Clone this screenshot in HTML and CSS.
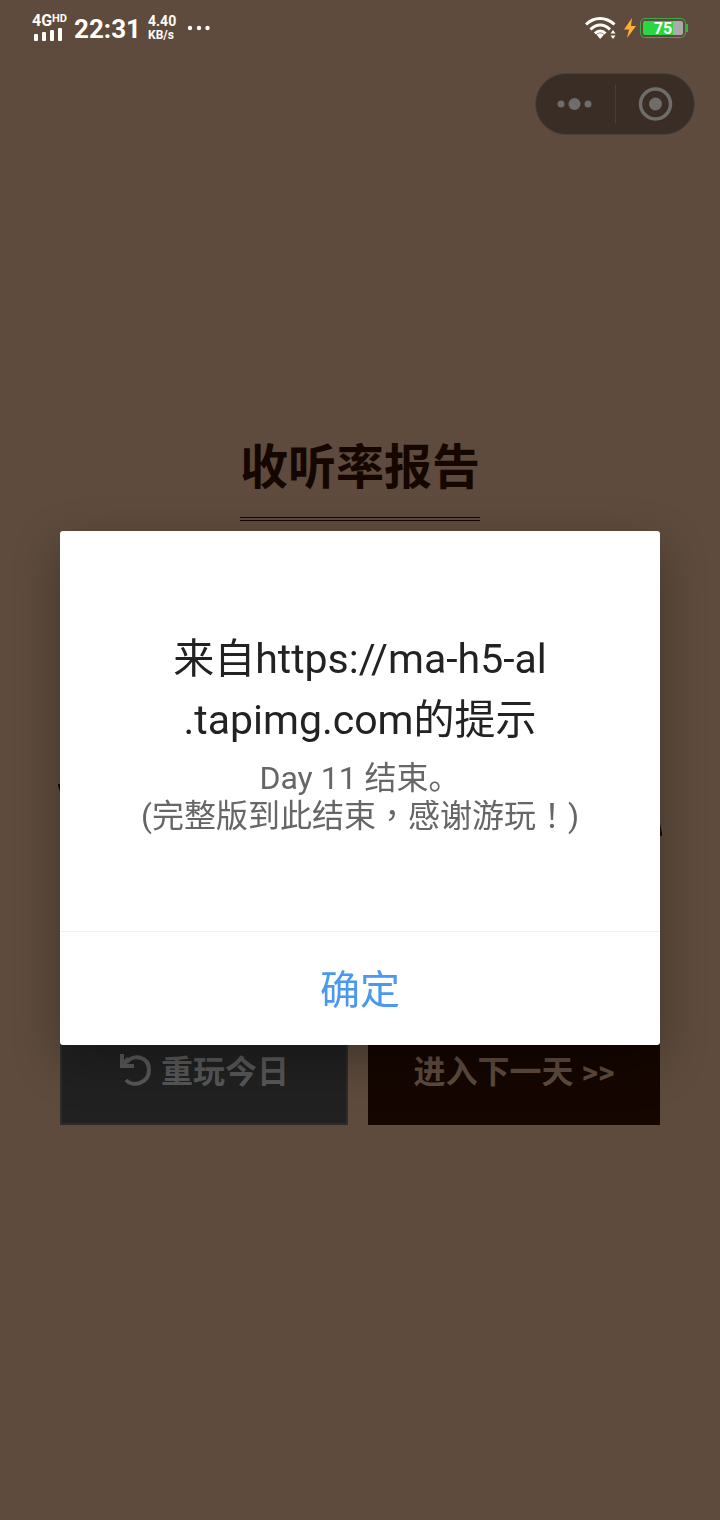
FILE: index.html
```
<!DOCTYPE html>
<html lang="zh-CN">
<head>
  <meta charset="UTF-8">
  <meta name="viewport" content="width=device-width, initial-scale=1.0">
  <title>收听率报告</title>
  <link rel="stylesheet" href="styles.css">
</head>
<body>
  <header class="status-bar">
    <div class="signal">
      <div class="signal-type">4G<small>HD</small></div>
      <svg width="30" height="13" viewBox="0 0 30 13" fill="currentColor">
        <rect x="0" y="6" width="4" height="7" rx="1"/>
        <rect x="8" y="4" width="4" height="9" rx="1"/>
        <rect x="16" y="2" width="4" height="11" rx="1"/>
        <rect x="24" y="0" width="4" height="13" rx="1"/>
      </svg>
    </div>
    <div class="time">22:31</div>
    <div class="speed">4.40<br><span>KB/s</span></div>
    <svg class="more" width="24" height="6" viewBox="0 0 24 6" fill="currentColor">
      <circle cx="3" cy="3" r="2.200"/>
      <circle cx="12" cy="3" r="2.200"/>
      <circle cx="20.500" cy="3" r="2.200"/>
    </svg>
    <svg class="wifi" width="32" height="24" viewBox="0 0 32 24" fill="none" stroke="currentColor" stroke-width="3">
      <path d="M1 8.500C9 .5 21 .5 29.500 8.500"/>
      <path d="M5.500 13.500C11.500 7.500 19 7.500 25 13.500"/>
      <path d="M10 17.500C13 14.200 17.500 14.200 20.500 17.500"/>
      <path d="M11.500 18.500Q15.200 16 19 18.500L15.200 23Z" fill="currentColor" stroke="none"/>
      <path d="M25.500 17.500L28 14L30.500 17.500ZM25.500 19.500L28 23L30.500 19.500Z" fill="currentColor" stroke="none"/>
    </svg>
    <svg class="bolt" width="12" height="20" viewBox="0 0 12 20">
      <path d="M8 0L0 11.500H5L3 20L12 8H7Z" fill="#ffae35"/>
    </svg>
    <div class="battery"><span>75</span></div>
  </header>

  <nav class="capsule">
    <button aria-label="更多">
      <svg width="36" height="14" viewBox="0 0 36 14" fill="currentColor">
        <circle cx="4" cy="7" r="3.500"/>
        <circle cx="17.500" cy="7" r="6"/>
        <circle cx="31" cy="7" r="3.500"/>
      </svg>
    </button>
    <button aria-label="关闭">
      <svg width="36" height="36" viewBox="0 0 36 36">
        <circle cx="18.500" cy="18" r="15" fill="none" stroke="currentColor" stroke-width="3.500"/>
        <circle cx="18.500" cy="18" r="6.500" fill="currentColor"/>
      </svg>
    </button>
  </nav>

  <main class="report">
    <h1>收听率报告</h1>
    <svg class="chart" viewBox="0 0 604 480" preserveAspectRatio="none">
      <polyline points="1,248 8,270 100,210 220,300 340,190 480,330 597,270 603,300" fill="none" stroke="#0b0f0a" stroke-width="3"/>
    </svg>
    <div class="actions">
      <button class="replay">
        <svg width="34" height="34" viewBox="0 0 34 34" fill="none" stroke="currentColor" stroke-width="4">
          <path d="M8 10C14 2 30 4 30 18C30 31 14 36 7 28"/>
          <path d="M1 2H5V8L8 5L11 8L8 12H15V16H1Z" fill="currentColor" stroke="none"/>
        </svg>
        重玩今日
      </button>
      <button class="next">进入下一天 &gt;&gt;</button>
    </div>
  </main>

  <div class="overlay">
    <div class="dialog" role="alertdialog" aria-labelledby="dialog-title">
      <div class="dialog-content">
        <h2 id="dialog-title">来自https://ma-h5-al<br>.tapimg.com的提示</h2>
        <p>Day 11 结束。<br>(完整版到此结束<span class="mid" lang="zh-TW">，</span>感谢游玩<span class="mid" lang="zh-TW">！</span>)</p>
      </div>
      <button class="confirm">确定</button>
    </div>
  </div>
</body>
</html>
```
FILE: styles.css
```
* {
  box-sizing: border-box;
}
body {
  margin: 0;
  min-height: 100vh;
  display: flex;
  flex-direction: column;
  background: #5e4b3d;
  font-family: Roboto, "Noto Sans CJK SC", sans-serif;
}
button {
  border: none;
  padding: 0;
  background: none;
  font-family: inherit;
  cursor: pointer;
}
svg {
  display: block;
  flex: none;
}

/* status bar */
.status-bar {
  height: 56px;
  padding: 0 32px;
  display: flex;
  align-items: center;
  color: #fffdf8;
  font-weight: 700;
}
.signal {
  width: 36px;
  padding-bottom: 2px;
}
.signal-type {
  display: flex;
  font-size: 16px;
  line-height: 14px;
}
.signal-type small {
  font-size: 11px;
  line-height: 9px;
}
.signal svg {
  margin-left: 2px;
}
.time {
  margin-left: 6px;
  padding-top: 2px;
  font-size: 26px;
}
.speed {
  margin-left: 7px;
  font-size: 14px;
  line-height: 13px;
}
.speed span {
  font-size: 12px;
}
.more {
  margin-left: 11px;
}
.wifi {
  margin-left: auto;
}
.bolt {
  margin: 0 4px 0 7px;
}
.battery {
  position: relative;
  width: 46px;
  height: 20px;
  margin-right: 2px;
  border: 1px solid #3fa845;
  border-radius: 5px;
  padding: 2px;
}
.battery span {
  display: block;
  height: 14px;
  border-radius: 2px;
  background: linear-gradient(to right, #2bd544 75%, #aaa 75%);
  font-size: 16px;
  line-height: 15px;
  text-align: center;
}
.battery::after {
  content: "";
  position: absolute;
  top: 5px;
  right: -3px;
  width: 2px;
  height: 8px;
  background: #2fb63f;
}

/* mini program capsule */
.capsule {
  align-self: flex-end;
  display: flex;
  width: 160px;
  height: 62px;
  margin: 17px 25px 0 0;
  padding: 11px 0;
  border: 1px solid #4b423b;
  border-radius: 31px;
  background: #3a2d25;
}
.capsule button {
  flex: 1;
  display: flex;
  align-items: center;
  justify-content: center;
  color: #6e6d69;
}
.capsule button + button {
  border-left: 1px solid #4a3d35;
}

/* report */
.report {
  flex: 1;
  display: flex;
  flex-direction: column;
  padding: 295px 60px 60px;
}
.report h1 {
  align-self: center;
  margin: 0 0 15px;
  padding-bottom: 11px;
  border-bottom: 4px double #150600;
  color: #150600;
  font-size: 48px;
  line-height: 76px;
}
.chart {
  width: calc(100% + 4px);
  height: 480px;
  margin: 0 -2px;
}
.actions {
  display: flex;
  gap: 20px;
  margin-top: 2px;
}
.actions button {
  height: 107px;
  display: flex;
  align-items: center;
  justify-content: center;
  padding-bottom: 6px;
  font-size: 32px;
  font-weight: 700;
}
.replay {
  flex: 284;
  gap: 8px;
  border: 2px solid #2c2c2b;
  background: #212121;
  color: #585858;
}
.next {
  flex: 292;
  background: #150600;
  color: #5e4b3d;
}

/* alert */
.overlay {
  position: fixed;
  inset: 56px 0 0;
  display: flex;
  align-items: center;
  justify-content: center;
  padding: 0 60px;
}
.dialog {
  width: 100%;
  border-radius: 3px;
  background: #fff;
  box-shadow: 0 16px 48px rgba(0, 0, 0, 0.3);
  text-align: center;
}
.dialog-content {
  padding: 98px 30px 96px;
}
.dialog h2 {
  margin: 0 0 8px;
  color: #222;
  font-size: 41px;
  font-weight: 400;
  line-height: 61px;
}
.dialog p {
  margin: 0;
  color: #666;
  font-size: 32px;
  line-height: 38px;
}
/* full-width punctuation centred in its cell */
.mid {
  font-family: Roboto, "Noto Sans CJK TC", sans-serif;
}
.confirm {
  width: 100%;
  height: 114px;
  padding-bottom: 4px;
  border-top: 1px solid #f0f0f0;
  color: #4b98f0;
  font-size: 40px;
  font-weight: 400;
}
```
